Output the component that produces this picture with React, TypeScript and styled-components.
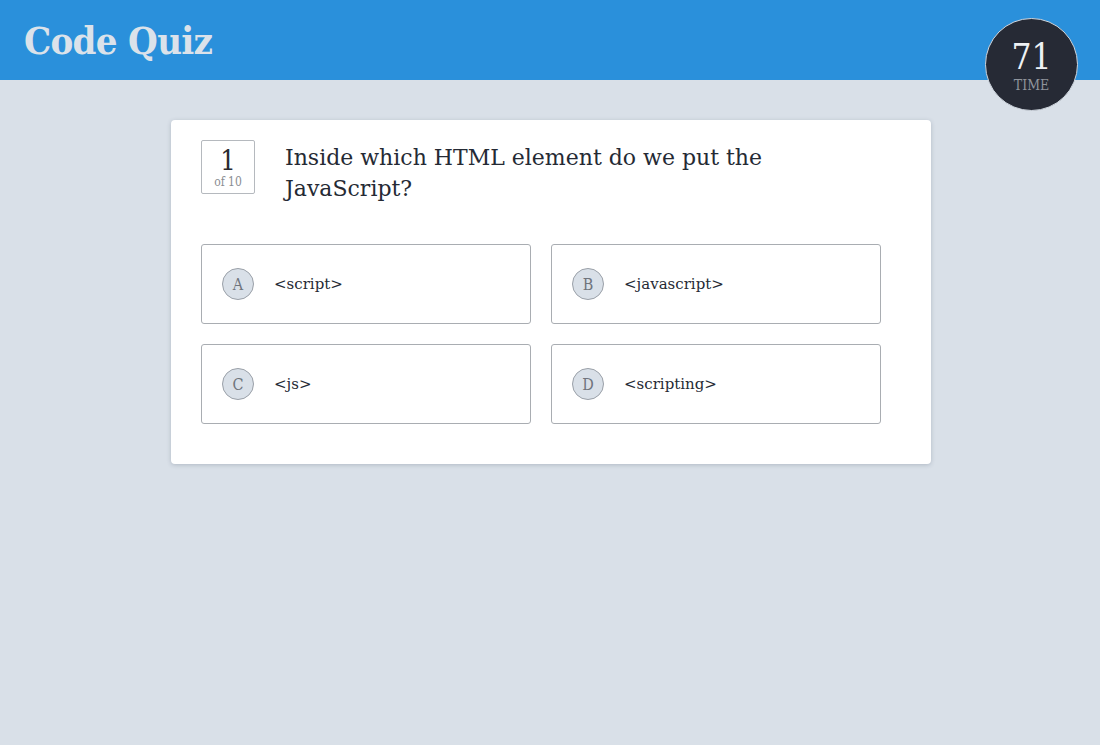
import React from "react";
import styled, { createGlobalStyle } from "styled-components";

const Global = createGlobalStyle`
  html, body { margin: 0; padding: 0; }
  body {
    background: #d9e0e8;
    font-family: "DejaVu Serif", "Liberation Serif", serif;
    color: #252a34;
    min-height: 745px;
  }
`;

const Header = styled.header`
  position: relative;
  height: 80px;
  background: #2a90db;
  display: flex;
  align-items: center;
  padding: 0 24px;
`;

const Logo = styled.h1`
  margin: 0;
  font-family: "DejaVu Serif Condensed", "DejaVu Serif", serif;
  font-size: 38px;
  font-weight: 700;
  color: #dbe2ea;
  letter-spacing: -0.7px;
`;

const Timer = styled.div`
  position: absolute;
  right: 22px;
  top: 18px;
  width: 93px;
  height: 93px;
  box-sizing: border-box;
  border-radius: 50%;
  background: #262a35;
  border: 1px solid #cfd6de;
  display: flex;
  flex-direction: column;
  align-items: center;
  justify-content: center;
  line-height: 1;
`;

const TimerValue = styled.div`
  font-family: "DejaVu Serif Condensed", "DejaVu Serif", serif;
  font-size: 35px;
  color: #eef1f4;
  margin-top: 2px;
`;

const TimerLabel = styled.div`
  font-family: "DejaVu Serif Condensed", "DejaVu Serif", serif;
  font-size: 14px;
  color: #8f949c;
  margin-top: 3px;
`;

const Main = styled.main`
  display: flex;
  justify-content: center;
  padding: 40px 0 0 2px;
`;

const Card = styled.section`
  width: 760px;
  box-sizing: border-box;
  background: #fff;
  border-radius: 4px;
  box-shadow: 0 1px 4px rgba(60, 70, 90, 0.25);
  padding: 20px 30px 40px;
`;

const QuestionRow = styled.div`
  display: flex;
  align-items: flex-start;
  gap: 30px;
`;

const Counter = styled.div`
  width: 54px;
  height: 54px;
  box-sizing: border-box;
  border: 1px solid #b5b9be;
  border-radius: 2px;
  display: flex;
  flex-direction: column;
  align-items: center;
  justify-content: center;
  line-height: 1;
`;

const CounterNum = styled.div`
  font-family: "DejaVu Serif Condensed", "DejaVu Serif", serif;
  font-size: 27px;
  color: #2a2a30;
`;

const CounterOf = styled.div`
  font-family: "DejaVu Serif Condensed", "DejaVu Serif", serif;
  font-size: 12px;
  color: #8a8d92;
  margin-top: 2px;
`;

const Question = styled.h2`
  margin: 2px 0 0;
  font-size: 22px;
  font-weight: 400;
  line-height: 31px;
  color: #252a34;
  max-width: 520px;
`;

const Options = styled.div`
  margin-top: 40px;
  width: 680px;
  display: grid;
  grid-template-columns: 1fr 1fr;
  gap: 20px;
`;

const Option = styled.button`
  height: 80px;
  box-sizing: border-box;
  background: #fff;
  border: 1px solid #a9adb2;
  border-radius: 3px;
  display: flex;
  align-items: center;
  gap: 20px;
  padding: 0 0 0 20px;
  font-family: inherit;
  cursor: pointer;
  text-align: left;
`;

const Letter = styled.span`
  width: 32px;
  height: 32px;
  box-sizing: border-box;
  border-radius: 50%;
  background: #d9e0e8;
  border: 1px solid #9aa0a8;
  display: flex;
  align-items: center;
  justify-content: center;
  font-family: "DejaVu Serif Condensed", "DejaVu Serif", serif;
  font-size: 16px;
  color: #6f747c;
`;

const OptionText = styled.span`
  font-size: 15px;
  color: #252a34;
`;

const answers = [
  { l: "A", t: "<script>" },
  { l: "B", t: "<javascript>" },
  { l: "C", t: "<js>" },
  { l: "D", t: "<scripting>" },
];

export default function App() {
  return (
    <>
      <Global />
      <Header>
        <Logo>Code Quiz</Logo>
        <Timer>
          <TimerValue>71</TimerValue>
          <TimerLabel>TIME</TimerLabel>
        </Timer>
      </Header>
      <Main>
        <Card>
          <QuestionRow>
            <Counter>
              <CounterNum>1</CounterNum>
              <CounterOf>of 10</CounterOf>
            </Counter>
            <Question>Inside which HTML element do we put the JavaScript?</Question>
          </QuestionRow>
          <Options>
            {answers.map((a) => (
              <Option key={a.l}>
                <Letter>{a.l}</Letter>
                <OptionText>{a.t}</OptionText>
              </Option>
            ))}
          </Options>
        </Card>
      </Main>
    </>
  );
}
